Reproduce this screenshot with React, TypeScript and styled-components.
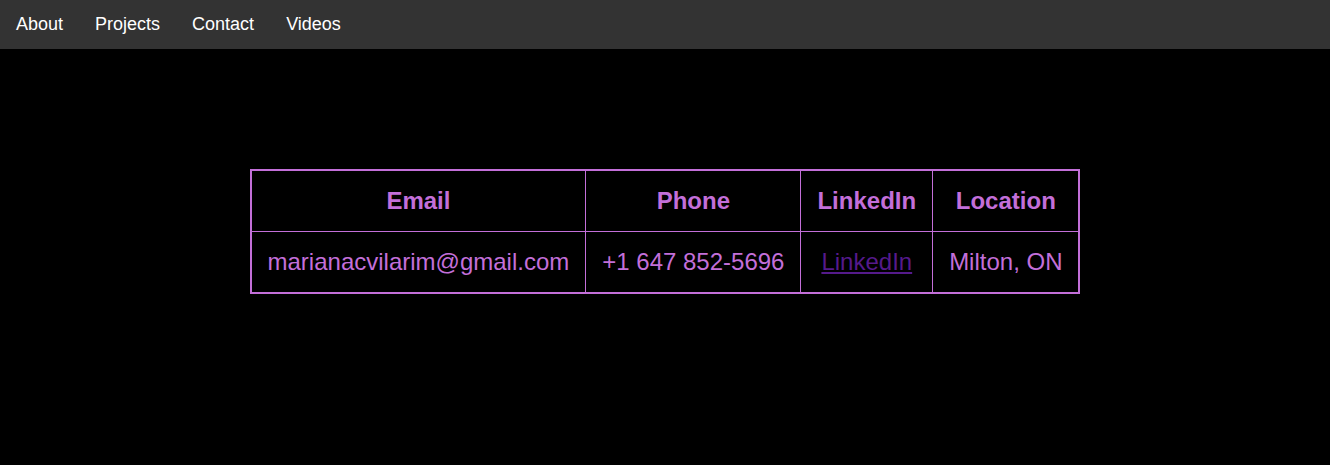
import React from "react";
import styled, { createGlobalStyle } from "styled-components";

const GlobalStyle = createGlobalStyle`
  html, body { margin: 0; padding: 0; background: #000; }
  body { font-family: "Liberation Sans", Arial, sans-serif; }
`;

const TopNav = styled.nav`
  display: flex;
  background: #333;
  overflow: hidden;
`;

const NavLink = styled.a`
  color: #ffffff;
  padding: 14px 16px;
  font-size: 18px;
  line-height: 21px;
  text-decoration: none;
`;

const Main = styled.main`
  display: flex;
  justify-content: center;
  padding-top: 120px;
`;

const Table = styled.table`
  border-collapse: collapse;
  border: 2px solid #c36fd9;
  color: #c36fd9;
  font-size: 24px;
`;

const Cell = styled.td<{ $head?: boolean }>`
  border: 1px solid #c36fd9;
  padding: 16px 16px;
  text-align: center;
  font-weight: ${(p) => (p.$head ? 700 : 400)};
`;

const ProfileLink = styled.a`
  color: #551a8b;
`;

export default function App() {
  return (
    <>
      <GlobalStyle />
      <TopNav>
        <NavLink href="#about">About</NavLink>
        <NavLink href="#projects">Projects</NavLink>
        <NavLink href="#contact">Contact</NavLink>
        <NavLink href="#videos">Videos</NavLink>
      </TopNav>
      <Main>
        <Table>
          <tbody>
            <tr>
              <Cell as="th" $head>Email</Cell>
              <Cell as="th" $head>Phone</Cell>
              <Cell as="th" $head>LinkedIn</Cell>
              <Cell as="th" $head>Location</Cell>
            </tr>
            <tr>
              <Cell>marianacvilarim@gmail.com</Cell>
              <Cell>+1 647 852-5696</Cell>
              <Cell>
                <ProfileLink href="#linkedin">LinkedIn</ProfileLink>
              </Cell>
              <Cell>Milton, ON</Cell>
            </tr>
          </tbody>
        </Table>
      </Main>
    </>
  );
}
